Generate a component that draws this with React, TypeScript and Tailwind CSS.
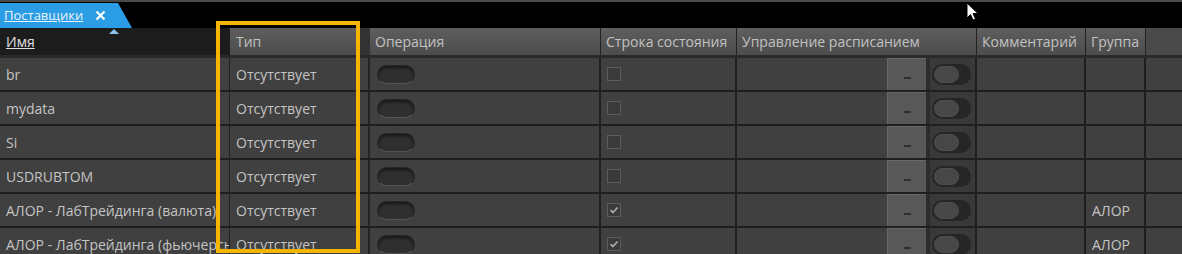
import React from 'react'

const rows = [
    { name: 'br', checked: false, group: '' },
    { name: 'mydata', checked: false, group: '' },
    { name: 'Si', checked: false, group: '' },
    { name: 'USDRUBTOM', checked: false, group: '' },
    { name: 'АЛОР - ЛабТрейдинга (валюта)', checked: true, group: 'АЛОР' },
    { name: 'АЛОР - ЛабТрейдинга (фьючерсы)', checked: true, group: 'АЛОР' },
]

const cols = 'grid grid-cols-[230px_140px_231px_136px_240px_109px_60px_1fr]'

function HeadCell({ children, className = '' }: { children?: React.ReactNode; className?: string }) {
    return (
        <div className={'flex items-center px-[5px] h-full bg-gradient-to-b from-[#5e5e5e] to-[#4c4c4c] border-r border-[#222] whitespace-nowrap overflow-hidden ' + className}>
            {children}
        </div>
    )
}

function Checkbox({ checked }: { checked: boolean }) {
    return (
        <div className='w-[14px] h-[14px] border border-[#5c5c5c] bg-[#3a3a3a] flex items-center justify-center'>
            {checked && (
                <svg width='10' height='10' viewBox='0 0 10 10'>
                    <path d='M1.5 5.2 L4 7.5 L8.5 2.5' stroke='#a8a8a8' strokeWidth='1.8' fill='none' />
                </svg>
            )}
        </div>
    )
}

function Row({ name, checked, group }: { name: string; checked: boolean; group: string }) {
    return (
        <div className={cols + ' h-[34px] bg-[#404040] border-b-2 border-[#1f1f1f] text-[#c4c4c4]'}>
            <div className='flex items-center px-[6px] border-r border-[#1f1f1f] whitespace-nowrap overflow-hidden'>{name}</div>
            <div className='flex items-center px-[6px] border-r-2 border-[#232323]'>Отсутствует</div>
            <div className='flex items-center pl-[7px] border-r-2 border-[#1f1f1f]'>
                <div className='w-[38px] h-[19px] rounded-full bg-[#2f2f2f] border border-[#262626] border-b-[#555] shadow-[inset_0_2px_3px_rgba(0,0,0,0.5)]' />
            </div>
            <div className='flex items-center pl-[6px] border-r-2 border-[#1f1f1f]'>
                <Checkbox checked={checked} />
            </div>
            <div className='flex items-stretch justify-end border-r-2 border-[#1f1f1f]'>
                <div className='w-[39px] bg-[#585858] border-l border-t border-[#686868] flex items-center justify-center pt-[6px]'>
                    <div className='w-[7px] h-[2px] bg-[#2e2e2e]' />
                </div>
                <div className='w-[4px] bg-[#2c2c2c]' />
                <div className='w-[45px] bg-[#393939] flex items-center pl-[2px]'>
                    <div className='w-[39px] h-[21px] rounded-full bg-[#262626] flex items-center pl-[2px]'>
                        <div className='w-[25px] h-[17px] rounded-full bg-[#474747] border border-[#505050]' />
                    </div>
                </div>
            </div>
            <div className='border-r-2 border-[#1f1f1f]' />
            <div className='flex items-center px-[6px] border-r-2 border-[#1f1f1f]'>{group}</div>
            <div />
        </div>
    )
}

export default function App() {
    return (
        <div className='relative w-[1182px] h-[254px] overflow-hidden bg-[#000] text-[14px]' style={{ fontFamily: '"Open Sans", "Liberation Sans", sans-serif' }}>
            <div className='h-[2px] bg-[#4a4a4a]' />
            <div className='h-[26px] flex items-end'>
                <div className='relative h-[25px] w-[132px] bg-[#2b9de4] flex items-center pl-[4px] gap-[12px] [clip-path:polygon(0_0,118px_0,132px_100%,0_100%)]'>
                    <span className='text-[#e8f3fb] underline text-[13px]'>Поставщики</span>
                    <svg width='11' height='11' viewBox='0 0 11 11'>
                        <path d='M1.5 1.5 L9.5 9.5 M9.5 1.5 L1.5 9.5' stroke='#fff' strokeWidth='2.2' />
                    </svg>
                </div>
            </div>
            <div className={cols + ' h-[30px] text-[#c2c2c2] border-b-[3px] border-[#2a2a2a]'}>
                <div className='relative flex items-center px-[6px] bg-[#1c1c1c]'>
                    <span className='text-[#e0e0e0] underline'>Имя</span>
                    <div className='absolute left-[109px] top-[1px] w-0 h-0 border-l-[5px] border-r-[5px] border-b-[5px] border-l-transparent border-r-transparent border-b-[#8cc4ea]' />
                </div>
                <div className='flex h-full'>
                    <div className='flex-1 flex items-center px-[6px] bg-gradient-to-b from-[#5e5e5e] to-[#4c4c4c]'>Тип</div>
                    <div className='w-[12px] bg-[#333] border-l border-[#222]' />
                </div>
                <HeadCell>Операция</HeadCell>
                <HeadCell>Строка состояния</HeadCell>
                <HeadCell>Управление расписанием</HeadCell>
                <HeadCell>Комментарий</HeadCell>
                <HeadCell>Группа</HeadCell>
                <div className='bg-[#4a4a4a]' />
            </div>
            {rows.map((r) => (
                <Row key={r.name} {...r} />
            ))}
            <div className='absolute left-[216px] top-[21px] w-[144px] h-[232px] border-4 border-[#f5b400]' />
            <svg className='absolute left-[966px] top-[2px]' width='14' height='20' viewBox='0 0 14 20'>
                <path d='M1 1 L1 16 L4.5 12.5 L7 18 L9.5 17 L7 11.5 L12 11.5 Z' fill='#fff' stroke='#000' strokeWidth='1' />
            </svg>
        </div>
    )
}
